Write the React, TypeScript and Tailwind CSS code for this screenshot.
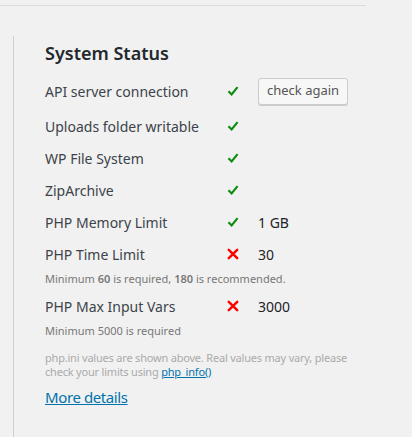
import React from "react";

const font = { fontFamily: '"Noto Sans", "Open Sans", Arial, sans-serif' };

function Check() {
  return (
    <svg width="14" height="14" viewBox="0 0 20 20" aria-hidden="true">
      <path d="M3.5 10.5 L8 15 L16.5 4.5" fill="none" stroke="#0b8a0b" strokeWidth="3" strokeLinecap="butt" strokeLinejoin="miter" />
    </svg>
  );
}

function Cross() {
  return (
    <svg width="14" height="14" viewBox="0 0 20 20" aria-hidden="true">
      <path d="M4 4 L16 16 M16 4 L4 16" fill="none" stroke="#ff0000" strokeWidth="3.6" strokeLinecap="round" />
    </svg>
  );
}

type Row = {
  label: string;
  ok: boolean;
  value?: string;
  note?: React.ReactNode;
  action?: boolean;
};

const rows: Row[] = [
  { label: "API server connection", ok: true, action: true },
  { label: "Uploads folder writable", ok: true },
  { label: "WP File System", ok: true },
  { label: "ZipArchive", ok: true },
  { label: "PHP Memory Limit", ok: true, value: "1 GB" },
  {
    label: "PHP Time Limit",
    ok: false,
    value: "30",
    note: (
      <>
        Minimum <b className="font-semibold">60</b> is required, <b className="font-semibold">180</b> is recommended.
      </>
    ),
  },
  { label: "PHP Max Input Vars", ok: false, value: "3000", note: <>Minimum 5000 is required</> },
];

export default function App() {
  return (
    <div className="w-[412px] h-[437px] bg-[#f1f1f1] overflow-hidden" style={font}>
      <div className="w-[366px] h-[6px] border-b border-[#dcdcdc]" />
      <div className="ml-[13px] mt-[30px] border-l border-[#cfcfcf] h-[401px] pl-[31px]">
        <h2 className="pt-[5px] text-[18px] leading-[24px] font-semibold text-[#23282d]">System Status</h2>
        <div className="mt-[7px] flex flex-col">
          {rows.map((r) => (
            <div key={r.label} className="flex flex-col">
              <div className={`flex items-center ${r.action ? "h-[38px]" : "h-[32px]"}`}>
                <div className="w-[181px] text-[14px] text-[#3c434a]">{r.label}</div>
                <div className="w-[32px] flex items-center">{r.ok ? <Check /> : <Cross />}</div>
                {r.value && <div className="text-[14px] text-[#1d2327]">{r.value}</div>}
                {r.action && (
                  <button className="h-[27px] px-[8px] text-[13px] text-[#555] bg-[#f7f7f7] border border-[#ccc] rounded-[3px] shadow-[0_1px_0_#ccc]">
                    check again
                  </button>
                )}
              </div>
              {r.note && (
                <div className="mt-[2px] mb-[4px] text-[11px] leading-[14px] text-[#777]">{r.note}</div>
              )}
            </div>
          ))}
        </div>
        <p className="mt-[9px] w-[320px] text-[11px] leading-[14px] tracking-[-0.2px] text-[#aaa]">
          php.ini values are shown above. Real values may vary, please
          <br />
          check your limits using <a className="text-[#0073aa] underline">php_info()</a>
        </p>
        <a className="inline-block mt-[8px] text-[15px] leading-[20px] tracking-[-0.4px] text-[#0073aa] underline">
          More details
        </a>
      </div>
    </div>
  );
}
